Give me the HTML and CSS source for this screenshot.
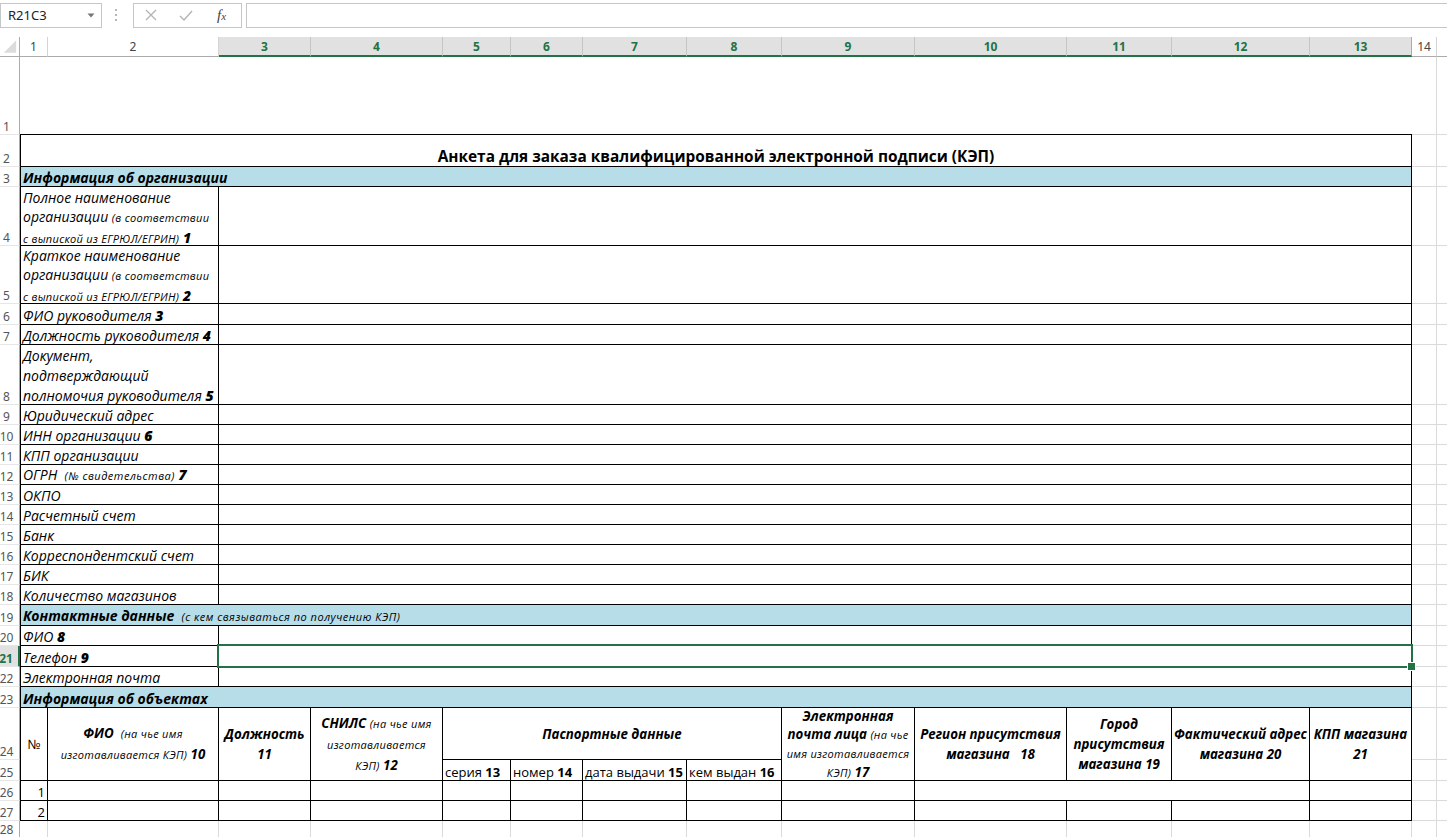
FILE: index.html
```html
<!DOCTYPE html>
<html lang="ru">
<head>
<meta charset="utf-8">
<title>Анкета КЭП</title>
<link rel="stylesheet" href="styles.css">
</head>
<body>
<div class="app">
  <div class="toolbar">
    <div class="namebox"><span>R21C3</span><svg class="dd" width="8" height="5" viewBox="0 0 8 5"><path d="M0.5 0.5h7L4 4.5z" fill="#767676"/></svg></div>
    <svg class="dots" width="4" height="14" viewBox="0 0 4 14"><circle cx="2" cy="2" r="1.1" fill="#a6a6a6"/><circle cx="2" cy="7" r="1.1" fill="#a6a6a6"/><circle cx="2" cy="12" r="1.1" fill="#a6a6a6"/></svg>
    <div class="fxbox">
      <svg class="ico-x" width="12" height="12" viewBox="0 0 12 12"><path d="M1 1L11 11M11 1L1 11" stroke="#b4b4b4" stroke-width="1.3" fill="none"/></svg>
      <svg class="ico-ok" width="14" height="11" viewBox="0 0 14 11"><path d="M1 6L5 10L13 1" stroke="#b4b4b4" stroke-width="1.4" fill="none"/></svg>
      <span class="fx">f<span class="fxs">x</span></span>
    </div>
    <div class="formula"></div>
  </div>

  <div class="sheet">
    <!-- column headers -->
    <div class="ch corner"><svg width="20" height="20" viewBox="0 0 20 20"><path d="M17 3V16H4z" fill="#dcdcdc"/></svg></div>
    <div class="ch">1</div>
    <div class="ch">2</div>
    <div class="ch on">3</div>
    <div class="ch on">4</div>
    <div class="ch on">5</div>
    <div class="ch on">6</div>
    <div class="ch on">7</div>
    <div class="ch on">8</div>
    <div class="ch on">9</div>
    <div class="ch on">10</div>
    <div class="ch on">11</div>
    <div class="ch on">12</div>
    <div class="ch on last">13</div>
    <div class="ch">14</div>
    <div class="ch rest"></div>

    <!-- row 1 -->
    <div class="rh">1</div>
    <div class="blank s13"></div>
    <div class="g"></div><div class="gx"></div>

    <!-- row 2 -->
    <div class="rh">2</div>
    <div class="c s13 first title"><div class="t">Анкета для заказа квалифицированной электронной подписи (КЭП)</div></div>
    <div class="g"></div><div class="gx"></div>

    <!-- row 3 -->
    <div class="rh">3</div>
    <div class="c s13 first sec"><div class="t">Информация об организации</div></div>
    <div class="g"></div><div class="gx"></div>

    <!-- row 4 -->
    <div class="rh">4</div>
    <div class="c s2 first lbl multi"><div class="t">Полное наименование<br>организации <span class="sm">(в соответствии</span><br><span class="sm">с выпиской из ЕГРЮЛ/ЕГРИН)</span> <b>1</b></div></div>
    <div class="c s11"></div>
    <div class="g"></div><div class="gx"></div>

    <!-- row 5 -->
    <div class="rh">5</div>
    <div class="c s2 first lbl multi"><div class="t">Краткое наименование<br>организации <span class="sm">(в соответствии</span><br><span class="sm">с выпиской из ЕГРЮЛ/ЕГРИН)</span> <b>2</b></div></div>
    <div class="c s11"></div>
    <div class="g"></div><div class="gx"></div>

    <!-- row 6 -->
    <div class="rh">6</div>
    <div class="c s2 first lbl"><div class="t">ФИО руководителя <b>3</b></div></div>
    <div class="c s11"></div>
    <div class="g"></div><div class="gx"></div>

    <!-- row 7 -->
    <div class="rh">7</div>
    <div class="c s2 first lbl"><div class="t">Должность руководителя <b>4</b></div></div>
    <div class="c s11"></div>
    <div class="g"></div><div class="gx"></div>

    <!-- row 8 -->
    <div class="rh">8</div>
    <div class="c s2 first lbl"><div class="t">Документ,<br>подтверждающий<br>полномочия руководителя <b>5</b></div></div>
    <div class="c s11"></div>
    <div class="g"></div><div class="gx"></div>

    <!-- row 9 -->
    <div class="rh">9</div>
    <div class="c s2 first lbl"><div class="t">Юридический адрес</div></div>
    <div class="c s11"></div>
    <div class="g"></div><div class="gx"></div>

    <!-- row 10 -->
    <div class="rh">10</div>
    <div class="c s2 first lbl"><div class="t">ИНН организации <b>6</b></div></div>
    <div class="c s11"></div>
    <div class="g"></div><div class="gx"></div>

    <!-- row 11 -->
    <div class="rh">11</div>
    <div class="c s2 first lbl"><div class="t">КПП организации</div></div>
    <div class="c s11"></div>
    <div class="g"></div><div class="gx"></div>

    <!-- row 12 -->
    <div class="rh">12</div>
    <div class="c s2 first lbl"><div class="t">ОГРН&nbsp; <span class="sm">(№ свидетельства)</span> <b>7</b></div></div>
    <div class="c s11"></div>
    <div class="g"></div><div class="gx"></div>

    <!-- row 13 -->
    <div class="rh">13</div>
    <div class="c s2 first lbl"><div class="t">ОКПО</div></div>
    <div class="c s11"></div>
    <div class="g"></div><div class="gx"></div>

    <!-- row 14 -->
    <div class="rh">14</div>
    <div class="c s2 first lbl"><div class="t">Расчетный счет</div></div>
    <div class="c s11"></div>
    <div class="g"></div><div class="gx"></div>

    <!-- row 15 -->
    <div class="rh">15</div>
    <div class="c s2 first lbl"><div class="t">Банк</div></div>
    <div class="c s11"></div>
    <div class="g"></div><div class="gx"></div>

    <!-- row 16 -->
    <div class="rh">16</div>
    <div class="c s2 first lbl"><div class="t">Корреспондентский счет</div></div>
    <div class="c s11"></div>
    <div class="g"></div><div class="gx"></div>

    <!-- row 17 -->
    <div class="rh">17</div>
    <div class="c s2 first lbl"><div class="t">БИК</div></div>
    <div class="c s11"></div>
    <div class="g"></div><div class="gx"></div>

    <!-- row 18 -->
    <div class="rh">18</div>
    <div class="c s2 first lbl"><div class="t">Количество магазинов</div></div>
    <div class="c s11"></div>
    <div class="g"></div><div class="gx"></div>

    <!-- row 19 -->
    <div class="rh">19</div>
    <div class="c s13 first sec"><div class="t">Контактные данные&nbsp; <span class="sm">(с кем связываться по получению КЭП)</span></div></div>
    <div class="g"></div><div class="gx"></div>

    <!-- row 20 -->
    <div class="rh">20</div>
    <div class="c s2 first lbl"><div class="t">ФИО <b>8</b></div></div>
    <div class="c s11"></div>
    <div class="g"></div><div class="gx"></div>

    <!-- row 21 -->
    <div class="rh rsel">21</div>
    <div class="c s2 first lbl"><div class="t">Телефон <b>9</b></div></div>
    <div class="c s11 sel"></div>
    <div class="g"></div><div class="gx"></div>

    <!-- row 22 -->
    <div class="rh">22</div>
    <div class="c s2 first lbl"><div class="t">Электронная почта</div></div>
    <div class="c s11"></div>
    <div class="g"></div><div class="gx"></div>

    <!-- row 23 -->
    <div class="rh">23</div>
    <div class="c s13 first sec"><div class="t">Информация об объектах</div></div>
    <div class="g"></div><div class="gx"></div>

    <!-- row 24 -->
    <div class="rh">24</div>
    <div class="c r2 first hd num"><div class="t">№</div></div>
    <div class="c r2 hd"><div class="t"><b>ФИО</b>&nbsp; <span class="sm">(на чье имя</span><br><span class="sm">изготавливается КЭП)</span> <b class="n">10</b></div></div>
    <div class="c r2 hd"><div class="t"><b>Должность</b><br><b class="n">11</b></div></div>
    <div class="c r2 hd"><div class="t"><b>СНИЛС</b> <span class="sm">(на чье имя</span><br><span class="sm">изготавливается</span><br><span class="sm">КЭП)</span> <b class="n">12</b></div></div>
    <div class="c s4 hd"><div class="t"><b>Паспортные данные</b></div></div>
    <div class="c r2 hd mail"><div class="t"><b>Электронная</b><br><b>почта лица</b> <span class="sm">(на чье</span><br><span class="sm">имя изготавливается</span><br><span class="sm">КЭП)</span> <b class="n">17</b></div></div>
    <div class="c r2 hd"><div class="t"><b>Регион присутствия</b><br><b>магазина</b>&nbsp;&nbsp; <b class="n">18</b></div></div>
    <div class="c r2 hd"><div class="t"><b>Город</b><br><b>присутствия</b><br><b>магазина</b> <b class="n">19</b></div></div>
    <div class="c r2 hd"><div class="t"><b>Фактический адрес</b><br><b>магазина</b> <b class="n">20</b></div></div>
    <div class="c r2 hd"><div class="t"><b>КПП магазина</b><br><b class="n">21</b></div></div>
    <div class="g"></div><div class="gx"></div>

    <!-- row 25 -->
    <div class="rh">25</div>
    <div class="c pp"><div class="t">серия <b>13</b></div></div>
    <div class="c pp"><div class="t">номер <b>14</b></div></div>
    <div class="c pp"><div class="t">дата выдачи <b>15</b></div></div>
    <div class="c pp"><div class="t">кем выдан <b>16</b></div></div>
    <div class="g"></div><div class="gx"></div>

    <!-- row 26 -->
    <div class="rh">26</div>
    <div class="c first idx"><div class="t">1</div></div>
    <div class="c"></div>
    <div class="c"></div>
    <div class="c"></div>
    <div class="c"></div>
    <div class="c"></div>
    <div class="c"></div>
    <div class="c"></div>
    <div class="c"></div>
    <div class="c s3"></div>
    <div class="c"></div>
    <div class="g"></div><div class="gx"></div>

    <!-- row 27 -->
    <div class="rh">27</div>
    <div class="c first idx"><div class="t">2</div></div>
    <div class="c"></div>
    <div class="c"></div>
    <div class="c"></div>
    <div class="c"></div>
    <div class="c"></div>
    <div class="c"></div>
    <div class="c"></div>
    <div class="c"></div>
    <div class="c"></div>
    <div class="c"></div>
    <div class="c"></div>
    <div class="c"></div>
    <div class="g"></div><div class="gx"></div>

    <!-- row 28 -->
    <div class="rh last-row">28</div>
    <div class="g"></div><div class="g"></div><div class="g"></div><div class="g"></div>
    <div class="g"></div><div class="g"></div><div class="g"></div><div class="g"></div>
    <div class="g"></div><div class="g"></div><div class="g"></div><div class="g"></div>
    <div class="g"></div><div class="g"></div>
    <div class="gx"></div>
  </div>
</div>
</body>
</html>
```

FILE: styles.css
```css
* { box-sizing: border-box; margin: 0; padding: 0; }

html, body {
  width: 1447px;
  height: 837px;
  overflow: hidden;
  background: #fff;
}

body {
  font-family: "Open Sans", "Noto Sans", sans-serif;
  color: #000;
}

/* ---------- formula toolbar ---------- */
.toolbar {
  height: 30px;
  display: flex;
  align-items: center;
}

.namebox {
  width: 102px;
  height: 25px;
  border: 1px solid #c6c6c6;
  display: flex;
  align-items: center;
  justify-content: space-between;
  padding: 0 6px 0 7px;
  font-family: "Noto Sans", "Open Sans", sans-serif;
  font-size: 13px;
  color: #222;
}

.dots { margin-left: 12px; }

.fxbox {
  margin-left: 15px;
  width: 109px;
  height: 25px;
  border: 1px solid #c6c6c6;
  display: flex;
  align-items: center;
  padding-left: 11px;
}

.ico-ok { margin-left: 22px; }

.fx {
  margin-left: 24px;
  font-family: "Liberation Serif", serif;
  font-style: italic;
  font-size: 15px;
  color: #444;
  line-height: 1;
}

.fxs { font-size: 11px; }

.formula {
  flex: 1;
  height: 25px;
  margin-left: 4px;
  border: 1px solid #c6c6c6;
  border-right: none;
}

/* ---------- sheet grid ---------- */
.sheet {
  margin-top: 7px;
  display: grid;
  grid-template-columns: 20px 28px 171px 92px 132px 68px 72px 104px 95px 133px 152px 105px 138px 102px 25px 1fr;
  grid-template-rows: 20px 78px 32px 20px 59px 58px 21px 20px 60px repeat(10, 20px) 21px 20px 21px 20px 21px 52px 21px 20px 20px 20px;
}

.s2 { grid-column: span 2; }
.s3 { grid-column: span 3; }
.s4 { grid-column: span 4; }
.s11 { grid-column: span 11; }
.s13 { grid-column: span 13; }
.r2 { grid-row: span 2; }

/* column headers */
.ch {
  display: flex;
  align-items: center;
  justify-content: center;
  border-right: 1px solid #d4d4d4;
  border-bottom: 1px solid #ababab;
  font-family: "Noto Sans", "Open Sans", sans-serif;
  font-size: 12px;
  color: #444;
}

.ch.corner {
  border-right: 1px solid #ababab;
}

.ch.on {
  background: #e1e1e1;
  color: #217346;
  font-weight: 700;
  border-right-color: #c6c6c6;
  border-bottom: 2px solid #217346;
}

.ch.on.last { border-right-color: #ababab; }

.ch.rest { border-right: none; }

/* row headers */
.rh {
  display: flex;
  align-items: flex-end;
  justify-content: center;
  padding: 0 6px 0 0;
  border-right: 1px solid #ababab;
  border-bottom: 1px solid #e6e6e6;
  font-family: "Noto Sans", "Open Sans", sans-serif;
  font-size: 12px;
  line-height: 15px;
  color: #555;
}

.rh.last-row { padding-bottom: 3px; }

.rh.rsel {
  background: #e1e1e1;
  color: #217346;
  font-weight: 700;
  border-right: 2px solid #217346;
}

/* grid lines outside the form */
.g {
  border-right: 1px solid #dadada;
  border-bottom: 1px solid #dadada;
}

.gx {
  border-bottom: 1px solid #dadada;
}

.blank {
  border-bottom: 1px solid #000;
}

/* form cells */
.c {
  border-right: 1px solid #000;
  border-bottom: 1px solid #000;
  display: flex;
  align-items: flex-end;
  overflow: hidden;
  font-size: 13px;
  line-height: 20px;
  padding: 0 2px;
}

.c .t {
  white-space: nowrap;
  margin-bottom: -2px;
}

.first { border-left: 1px solid #000; }

.title {
  justify-content: center;
  font-weight: 700;
  font-size: 15.4px;
  padding-bottom: 1px;
}

.sec {
  background: #b7dee8;
  font-weight: 700;
  font-style: italic;
  font-size: 14px;
}

.sec .sm { font-weight: 400; }

.lbl {
  font-style: italic;
  font-size: 14px;
}

.sm {
  font-size: 11px;
  letter-spacing: 0.5px;
}

.multi .t {
  line-height: 19.5px;
  margin-bottom: -3px;
}

.multi .sm { letter-spacing: 0.3px; }

.lbl b, .sec b { font-weight: 800; }

.hd {
  align-items: center;
  justify-content: center;
  text-align: center;
  font-style: italic;
  font-size: 13.3px;
  line-height: 20px;
}

.hd .t { margin-bottom: 0; }

.hd .sm { letter-spacing: 0.3px; }

.hd b { font-weight: 700; }
.hd .n { font-style: italic; }

.hd.mail { line-height: 18px; }

.num {
  font-style: normal;
  font-size: 13px;
}

.pp {
  padding-left: 2px;
}

.pp b { font-weight: 700; }

.idx {
  justify-content: flex-end;
  padding-right: 2px;
}

/* active cell selection */
.sel {
  position: relative;
  overflow: visible;
  z-index: 2;
}

.sel::after {
  content: "";
  position: absolute;
  left: -2px;
  top: -2px;
  right: -2px;
  bottom: -2px;
  border: 2px solid #217346;
}

.sel::before {
  content: "";
  position: absolute;
  right: -5px;
  bottom: -5px;
  width: 7px;
  height: 7px;
  background: #217346;
  border: 1px solid #fff;
  z-index: 3;
}
```
